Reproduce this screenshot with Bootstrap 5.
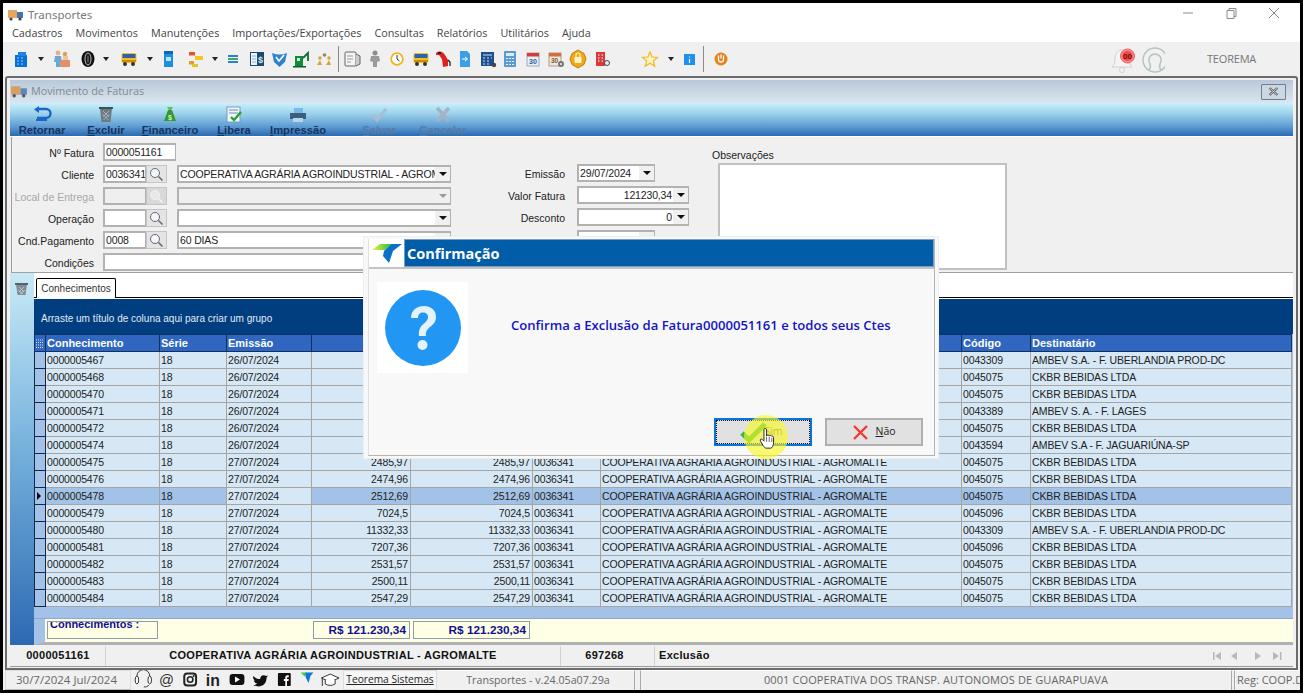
<!DOCTYPE html>
<html lang="pt-BR">
<head>
<meta charset="utf-8">
<title>Transportes</title>
<link href="https://cdn.jsdelivr.net/npm/bootstrap@5.3.0/dist/css/bootstrap.min.css" rel="stylesheet">
<style>
html,body{margin:0;width:1303px;height:695px;overflow:hidden;background:#fff}
body{font-family:"Liberation Sans",Arial,sans-serif;font-size:10.5px;color:#222}
.frame{position:relative;width:1303px;height:693px;border:3px solid #000;display:flex;flex-direction:column;background:#f0f0f0}
.ttl{height:19px;background:#fff;display:flex;align-items:center;padding:4px 0 0 5px;font-family:"Noto Sans",sans-serif;font-size:11.5px;color:#777;gap:4px}
.ctrls{margin-left:auto;display:flex;gap:0;margin-top:-4px}
.menu-bar{height:21px;background:#fff;display:flex;align-items:center;padding:3px 0 0 9px;gap:13px;font-family:"Open Sans",sans-serif;font-size:10.8px;color:#444;border-bottom:1px solid #eee}
.tools{height:33px;background:#f0f0f0;display:flex;align-items:center;padding-left:7px}
.usr{margin-left:auto;display:flex;align-items:center;font-family:"Open Sans",sans-serif;font-size:11px;color:#777}
.usr span{width:135px;padding-left:42px;letter-spacing:-.2px}
.win{margin:0 2px 0 2px;height:594px;border:2px solid #6b6b6b;border-radius:3px 3px 0 0;padding:2px 3px 1px 3px;display:flex;flex-direction:column;background:#f0f0f0;flex:none}
.wtitle{height:23px;flex:none;background:linear-gradient(#b9c8d8,#dae5ef);display:flex;align-items:center;padding-left:1px;gap:3px;font-family:"Open Sans",sans-serif;font-size:10.8px;color:#7f8a96}
.xbtn{margin-left:auto;margin-right:7px;width:25px;height:16px;border:1px solid #6f7f90;border-radius:1px;background:#cbd7e3;display:flex;align-items:center;justify-content:center}
.wbar{height:34px;flex:none;background:linear-gradient(#c9f1fc 0,#9fd4ec 30%,#5c9bd2 72%,#2c69b2 100%);border-bottom:1px solid #fff;display:flex}
.wbtn{width:64px;display:flex;flex-direction:column;align-items:center;padding-top:3px;font-weight:700;font-size:11.2px;line-height:12px;color:#16345f}
.wbtn svg{height:18px;width:22px;display:block}
.wbtn u{text-decoration-thickness:1px}
.wgap{width:17px}
.wbtn.off{color:#557aa5}
.fpanel{height:136px;flex:none;margin-left:1px;border-left:1px solid #a0a0a0;border-bottom:1px solid #a0a0a0;display:flex;font-size:10.5px;padding-top:6px}
.fcol1{width:444px;display:flex;flex-direction:column;gap:4px;flex:none}
.frow{height:18px;display:flex;align-items:center}
.lbl{width:82px;text-align:right;margin-right:9px;flex:none;color:#222;padding-top:3px}
.lbl.dis{color:#a8a8a8}
.fld{height:18px;background:#fff;border-style:solid;border-width:2px 1px 2px 2px;border-color:#b2b2b2;display:flex;align-items:center;padding:0 1px;white-space:nowrap;overflow:hidden;flex:none;position:relative;font-size:10.5px;line-height:14px;letter-spacing:-.15px}
.fld.dis{background:#efefef}
.lup{width:21px;height:18px;background:#e4e4e4;border:1px solid #c4c4c4;display:flex;align-items:center;justify-content:center;flex:none}
.lup.dis{background:#d8d8d8}
.w73{width:73px}.w42{width:43px}.w275{width:274px;margin-left:10px}.w371{width:370px}.w78{width:78px}.w112{width:112px}
.num{justify-content:flex-end;padding-right:16px}
.drop{width:15px;height:14px;background:#f0f0f0;flex:none;display:flex;align-items:center;justify-content:center;position:absolute;right:0;top:0}
.drop.dis i{border-top-color:#999}
.drop i{display:block;width:0;height:0;border-left:4px solid transparent;border-right:4px solid transparent;border-top:4px solid #111}
.fcol2{width:262px;flex:none;padding:21px 0 0 22px;display:flex;flex-direction:column;gap:4px}
.lbl2{width:87px;flex:none;text-align:right;margin-right:12px;padding-top:3px}
.fcol3{flex:none}
.obs-l{margin-left:-6px;line-height:12px;margin:6px 0 2px -6px}
.obs{width:289px;height:107px;background:#fff;border:2px solid #c0c0c0}
.garea{height:372px;flex:none;display:flex;background:#f0f0f0}
.strip{width:24px;flex:none;background:linear-gradient(#c8eaf6,#79b4de 45%,#2c69b2);padding:8px 0 0 4px}
.gmain{width:1259px;flex:none;background:#fff;display:flex;flex-direction:column}
.tabs{height:25px;flex:none;border-bottom:1px solid #000;display:flex;align-items:flex-end;padding-left:2px}
.tabx{width:80px;height:20px;border:1px solid #000;border-bottom:0;border-radius:2px 2px 0 0;background:#fff;text-align:center;line-height:19px;font-size:10px;margin-bottom:-1px;color:#333}
.gbox{margin-top:1px;flex:1;display:flex;flex-direction:column;background:#a4c2e8;min-height:0}
.gpanel{height:35px;flex:none;background:#003e80;color:#e2ebf5;display:flex;align-items:center;padding:3px 0 0 7px;font-size:10px}
.table.gridt{table-layout:fixed;width:1257px;margin:0;border-collapse:collapse;font-size:10.5px;flex:none}
.table.gridt th,.table.gridt td{padding:1px 2px 0 1px;height:17px;line-height:15px;white-space:nowrap;overflow:hidden;color:#222;background-color:#d6e8f5;border:1px solid #a5a5a5;box-shadow:none;font-weight:400;letter-spacing:-.15px;vertical-align:middle}
.table.gridt th{background-color:#2f66c0;color:#fff;font-weight:700;font-size:11px;border-color:#10305f;text-align:left;padding:0 2px 0 1px;letter-spacing:0}
.table.gridt td.ix{background-color:#a4c2e8;border-color:#12284a;padding:0 0 0 2px}
.table.gridt td.r{text-align:right}
.table.gridt tr.sel td{background-color:#a2c2e8}
.table.gridt tr.sel td.lt{background-color:#d6e8f5}
.cw0{width:11px}.cw1{width:114px}.cw2{width:67px}.cw3{width:85px}.cw4{width:99px}.cw5{width:122px}.cw6{width:68px}.cw7{width:361px}.cw8{width:69px}.cw9{width:261px}
.grow-ind{width:0;height:0;border-top:4px solid transparent;border-bottom:4px solid transparent;border-left:4px solid #000;display:block}
.gblank{height:12px;flex:none;background:#a4c2e8;border-bottom:1px solid #8fa9c8}
.gfoot{flex:1;display:flex;background:#ffffe6;border-left:11px solid #a4c2e8;align-items:flex-start;padding-top:2px;border-bottom:3px solid #b0b0b0}
.fbx{border:1px solid #8f9caa;background:#ffffe6;height:18px;color:#10108f;font-weight:700;overflow:hidden;flex:none}
.fb1{width:111px;margin-left:2px;line-height:5px;font-size:11px;padding-left:2px}
.fb2{width:97px;margin-left:155px;text-align:right;font-size:11.8px;line-height:17px;padding-right:3px}
.fb3{width:117px;margin-left:3px;text-align:right;font-size:11.8px;line-height:17px;padding-right:3px}
.wstat{height:22px;flex:none;display:flex;align-items:center;font-weight:700;font-size:11px;background:#f0f0f0;border-bottom:1px solid #999;color:#111;letter-spacing:.3px;padding-left:1px}
.ws{height:20px;display:flex;align-items:center;justify-content:center;border-right:1px solid #d2d2d2;flex:none}
.ws1{width:95px}.ws2{width:455px}.ws3{width:94px;padding-right:6px}
.ws4{border:0;padding-left:4px}
.navs{margin-left:auto;margin-right:9px;display:flex;align-items:center}
.sbar{height:20px;flex:none;display:flex;background:#f0f0f0;font-family:"Open Sans",sans-serif;font-size:11px;color:#666;margin-left:2px}
.sp{height:20px;display:flex;align-items:center;justify-content:center;flex:none;border-right:1px solid #aaa;border-top:1px solid #fff;white-space:nowrap}
.sdate{width:126px;border:1px solid #ddd;border-bottom:1px solid #bbb;font-size:11.5px;color:#666;padding-right:3px}
.slink{width:94px;background:#f6f6f6;color:#222;text-decoration:underline;font-size:10.2px;border:1px solid #ddd}
.sver{width:198px;font-size:10.7px;padding-left:5px}
.sreg{width:66px;justify-content:flex-start;padding-left:2px;border-right:0;overflow:hidden;margin-left:2px;border-left:1px solid #aaa}
.scoop{width:592px;font-size:11px;border-left:1px solid #aaa;margin-left:5px;letter-spacing:.11px}
.dlg{position:absolute;left:361px;top:234px;width:574px;height:221px;background:#f8f8f8;padding:2px 3px 2px 4px;font-family:"Open Sans",sans-serif;box-shadow:0 0 0 1px #eee}
.dlg-in{height:100%;border:1px solid #b4b4b4;border-top:0;border-left-color:#e0e0e0;display:flex;flex-direction:column}
.dhead{height:30px;flex:none;display:flex;background:#fff;border-bottom:2px solid #c4c4c4}
.dlogo{width:35px;flex:none;display:flex;align-items:center;justify-content:center;padding-top:2px}
.dbar{flex:1;background:#015da8;border:1px solid #7b9cc4;color:#fff;font-weight:700;font-size:14.5px;line-height:28px;padding-left:2px;height:28px}
.dbody{flex:1;display:flex;padding:13px 0 0 8px}
.qbox{width:91px;height:91px;background:#fff;flex:none;display:flex;align-items:center;justify-content:center}
.dmsg{margin-left:43px;margin-top:34px;color:#1414c4;font-weight:600;font-size:13.1px;line-height:18px;white-space:nowrap}
.dfoot{height:37px;flex:none;display:flex;justify-content:flex-end;gap:13px;padding-right:11px}
.btn.dbtn{width:98px;height:28px;border-radius:0;padding:0;background:#e1e1e1;font-size:10.5px;color:#222;display:flex;align-items:center;justify-content:center;gap:6px;font-family:"Open Sans",sans-serif}
.btn.sim{border:2px solid #0a72dc;outline:1px dotted #111;outline-offset:-3px;color:#77773a;padding-left:21px;gap:0}
.btn.nao{border:2px solid #b0b0b0}
.hl{position:absolute;left:380px;top:178px;width:44px;height:44px;border-radius:50%;background:rgba(250,250,30,.62);pointer-events:none}
.csr{position:absolute;left:395px;top:191px;width:16px;height:21px;pointer-events:none}
.chk{position:absolute;left:375px;top:184px;width:30px;height:22px}
</style>
</head>
<body>
<div class="frame">
  <div class="ttl">
    <svg width="16" height="12" viewBox="0 0 16 12"><rect x="0" y="1" width="9" height="8" fill="#e8a560"/><rect x="9" y="3" width="6" height="6" fill="#3f73b5"/><circle cx="3" cy="10" r="1.600" fill="#444"/><circle cx="12" cy="10" r="1.600" fill="#444"/></svg>
    <span>Transportes</span>
    <div class="ctrls">
      <svg width="120" height="19" viewBox="1180 3 120 19"><path d="M1183 13h10" stroke="#8a8a8a"/><path d="M1227 10.500h7v8h-7zM1229 10.500v-2h7v8h-2" fill="none" stroke="#8a8a8a"/><path d="M1269 8l10 10M1279 8l-10 10" stroke="#8a8a8a"/></svg>
    </div>
  </div>
  <div class="menu-bar"><span>Cadastros</span><span>Movimentos</span><span>Manutenções</span><span>Importações/Exportações</span><span>Consultas</span><span>Relatórios</span><span>Utilitários</span><span>Ajuda</span></div>
  <div class="tools">
    <svg width="725" height="33" viewBox="10 43 725 33">
      <defs>
        <path id="crt" d="M-3 -2h6l-3 4z" fill="#222"/>
        <g id="bus"><rect x="-7.500" y="-6" width="15" height="10" rx="2" fill="#f0c020"/><rect x="-6.500" y="-5" width="13" height="4" fill="#2f62a8"/><rect x="-7" y="1" width="14" height="2" fill="#d08a10"/><circle cx="-4" cy="5" r="2" fill="#333"/><circle cx="4" cy="5" r="2" fill="#333"/></g>
      </defs>
      <rect x="15" y="55" width="12" height="12" fill="#0a70d8"/><rect x="18" y="52" width="8" height="4" fill="#1c84e4"/><path d="M17 58h2M21 58h2M17 61h2M21 61h2M17 64h2M21 64h2" stroke="#9cc8f0" stroke-width="1"/>
      <use href="#crt" x="41" y="59"/>
      <circle cx="58" cy="53" r="2.400" fill="#e8b080"/><path d="M55 56h6l1 6h-2v5h-4v-5h-2z" fill="#66a8d8"/><circle cx="65" cy="54" r="2.200" fill="#d9a060"/><rect x="60" y="60" width="10" height="7" rx="1" fill="#e0906a"/><path d="M63 56h5v4h-5z" fill="#f0c5a0"/>
      <ellipse cx="88" cy="59" rx="6.500" ry="8" fill="#111"/><ellipse cx="88" cy="59" rx="3" ry="6" fill="none" stroke="#eee" stroke-width=".8"/><ellipse cx="88" cy="59" rx="1" ry="4" fill="#555"/>
      <use href="#crt" x="106" y="59"/>
      <use href="#bus" x="129" y="59"/>
      <use href="#crt" x="150" y="59"/>
      <rect x="164" y="51" width="9" height="16" fill="#1c8fe0"/><rect x="164" y="51" width="9" height="3" fill="#0c68b4"/><path d="M166 57h5v4h-5z" fill="#bfe3f8"/>
      <rect x="189" y="52" width="6" height="3.500" fill="#e0542c"/><rect x="195" y="56" width="8" height="4" fill="#f7c51e"/><rect x="189" y="61" width="5" height="3.500" fill="#e89a28"/><rect x="192" y="64" width="6" height="3" fill="#e0c81e"/>
      <use href="#crt" x="215" y="59"/>
      <rect x="228" y="55" width="10" height="2" fill="#2d7fc8"/><rect x="228" y="58" width="10" height="2" fill="#3fa668"/><rect x="228" y="61" width="10" height="2" fill="#2d7fc8"/>
      <rect x="250" y="52" width="14" height="14" fill="#1b4a6e"/><rect x="251" y="53" width="6" height="12" fill="#eef5fa"/><path d="M252 56h4M252 59h4M252 62h4" stroke="#78a0c0" stroke-width=".8"/><text x="258" y="63" font-size="9" fill="#cfe6f5" font-family="Liberation Sans" font-weight="700">$</text>
      <path d="M272 53c5 2 10 2 15 0l-2 9-5.500 5-5.500-5z" fill="#2f82d0"/><path d="M276 57l3 4 5-6" stroke="#fff" stroke-width="1.600" fill="none"/>
      <rect x="295" y="56" width="8" height="10" fill="#128a3a"/><path d="M303 58l5-5v8" stroke="#0f6e30" stroke-width="1.800" fill="none"/><rect x="293" y="66" width="13" height="1.500" fill="#0b5e2a"/><rect x="297" y="58" width="3" height="3" fill="#d6f0dc"/>
      <circle cx="320" cy="58" r="1.800" fill="#d8a93a"/><circle cx="329" cy="58" r="1.800" fill="#d8a93a"/><circle cx="324.500" cy="55" r="1.800" fill="#8a8a6a"/><path d="M317 65l3-5 2 5zM326 65l3-5 2 5z" fill="#cfa838"/>
      <path d="M338.500 46v26" stroke="#8b8b8b"/>
      <rect x="345" y="52" width="11" height="14" rx="1" fill="#f4f4f4" stroke="#666"/><path d="M347 56h6M347 59h6M347 62h4" stroke="#999"/><path d="M356 54l4 2v8l-4 2" fill="#ccc" stroke="#666"/>
      <circle cx="375" cy="53" r="2.500" fill="#8d8d8d"/><path d="M371 56h8l1 5-3 1v5h-4v-5l-3-1z" fill="#9a9a9a"/>
      <circle cx="397" cy="59" r="5.800" fill="#fff" stroke="#f2b21c" stroke-width="1.800"/><path d="M397 55v4l2.500 2" stroke="#333" fill="none"/>
      <use href="#bus" x="421" y="59"/>
      <path d="M436 53c4-3 7-1 9 2l3 5v6l-5 1-1-8-3-4h-3z" fill="#e0201c"/><path d="M448 60l2 2v4" stroke="#111" fill="none" stroke-width="1.200"/><rect x="438" y="52" width="3" height="2" fill="#222"/>
      <path d="M460 51h7l3 3v13h-10z" fill="#3d9ee8"/><path d="M462 59h5M465 57l2.500 2-2.500 2" stroke="#fff" fill="none"/>
      <rect x="481" y="52" width="13" height="14" fill="#1e4f8e"/><path d="M483 55h9M483 58h2M487 58h2M491 58h1M483 61h2M487 61h2M483 64h2M487 64h2" stroke="#cfe2f5" stroke-width="1"/><circle cx="494" cy="65" r="2.200" fill="#445"/>
      <rect x="504" y="51" width="12" height="16" rx="1" fill="#5a9ad0"/><rect x="506" y="53" width="8" height="3" fill="#d9ecf8"/><path d="M506 58.500h2M509 58.500h2M512 58.500h2M506 61.500h2M509 61.500h2M512 61.500h2M506 64.500h2M509 64.500h2M512 64.500h2" stroke="#e9f4fb"/>
      <rect x="527" y="53" width="12" height="13" fill="#e6f0f8" stroke="#9ab"/><rect x="527" y="53" width="12" height="3.500" fill="#d83a34"/><text x="529" y="64" font-size="7" font-weight="700" fill="#2a5f9e" font-family="Liberation Sans">30</text>
      <rect x="549" y="53" width="12" height="13" fill="#f2e7dc" stroke="#a98"/><rect x="549" y="53" width="12" height="3.500" fill="#d0703c"/><text x="551" y="63" font-size="6.500" font-weight="700" fill="#7a5a3a" font-family="Liberation Sans">30</text><circle cx="561" cy="64" r="3" fill="#777"/><circle cx="561" cy="64" r="1" fill="#eee"/>
      <path d="M578 50l6 3.500 2 5.500-2 5.500-6 3.500-6-3.500-2-5.500 2-5.500z" fill="#f0a818" stroke="#c87e08"/><rect x="574.500" y="57" width="7" height="6" rx="1" fill="#fff3c8"/><path d="M576 57v-2a2 2 0 0 1 4 0v2" stroke="#fff3c8" fill="none" stroke-width="1.200"/>
      <rect x="596" y="52" width="9" height="14" fill="#d83a3a"/><path d="M598 55h1.500M601.500 55h1.500M598 58h1.500M601.500 58h1.500M598 61h1.500M601.500 61h1.500" stroke="#fff"/><circle cx="607" cy="63" r="2.500" fill="#e8eef4" stroke="#445"/>
      <path d="M650 52l2 5 5.500.4-4.200 3.500 1.400 5.300-4.700-3-4.700 3 1.400-5.300-4.200-3.500 5.500-.4z" fill="#fff4c0" stroke="#f0b820" stroke-width="1.200"/>
      <use href="#crt" x="671" y="59"/>
      <rect x="684" y="54" width="11" height="11" fill="#1e90f0"/><path d="M689.500 56.500v1M689.500 59v4" stroke="#fff" stroke-width="1.200"/>
      <path d="M703.500 46v26" stroke="#8b8b8b"/>
      <circle cx="721" cy="59" r="6.500" fill="#e8821a"/><path d="M718.500 55.500v4a2.500 2.500 0 0 0 5 0v-4" stroke="#fff" fill="none" stroke-width="1.300"/><path d="M721 54.500v4" stroke="#fff" stroke-width="1.300"/>
    </svg>
    <div class="usr">
      <svg width="60" height="33" viewBox="1105 43 60 33">
        <path d="M1122 50c5 0 7 4 7 9 0 4 1 6 3 8h-20c2-2 3-4 3-8 0-5 2-9 7-9z" fill="#f4f4f4" stroke="#d0d0d0"/><circle cx="1122" cy="70" r="2.500" fill="#f4f4f4" stroke="#d0d0d0"/>
        <circle cx="1127.500" cy="56" r="7" fill="#f48a8a" stroke="#f06060"/><circle cx="1127.500" cy="56" r="5" fill="#f04a4a"/><text x="1127.500" y="59" text-anchor="middle" font-size="8" font-weight="700" fill="#7a0a0a" font-family="Liberation Sans">00</text>
        <circle cx="1155" cy="60" r="12" fill="#f0f0f0" stroke="#b4c4c0" stroke-width="1.500"/><path d="M1149 70c2-3 2-4 1-6-2-3-2-9 5-10 7 1 7 7 5 10-1 2-1 3 1 6" fill="none" stroke="#b4c4c0" stroke-width="1.500"/>
      </svg>
      <span>TEOREMA</span>
    </div>
  </div>

  <div class="win">
    <div class="wtitle">
      <svg width="17" height="13" viewBox="0 0 16 12"><rect x="0" y="1" width="9" height="8" fill="#d6a062"/><rect x="9" y="3" width="6" height="6" fill="#5f86b5"/><circle cx="3" cy="10" r="1.600" fill="#555"/><circle cx="12" cy="10" r="1.600" fill="#555"/></svg>
      <span>Movimento de Faturas</span>
      <div class="xbtn"><svg width="11" height="9" viewBox="0 0 11 9"><path d="M1.500 1l8 7M9.500 1l-8 7" stroke="#555" stroke-width="2.200"/><path d="M1.500 1l8 7M9.500 1l-8 7" stroke="#eee" stroke-width=".8"/></svg></div>
    </div>
    <div class="wbar">
      <div class="wbtn"><svg viewBox="0 0 22 18"><path d="M7 3h8a4 4 0 0 1 0 9H6" fill="none" stroke="#1c66c8" stroke-width="2.400"/><path d="M8 0L3 3.500 8 7z" fill="#1c66c8"/><rect x="5" y="13" width="11" height="2" fill="#1c66c8"/></svg><span>Retornar</span></div>
      <div class="wbtn"><svg viewBox="0 0 22 18"><path d="M5 2h12l-1.500 14h-9z" fill="#6c7a80"/><rect x="4" y="1" width="14" height="2" fill="#40505a"/><path d="M8 5l6 6M14 5l-6 6M7.500 8l6 6M14.500 8l-6 6" stroke="#b4c0c6" stroke-width=".8"/></svg><span><u>E</u>xcluir</span></div>
      <div class="wbtn"><svg viewBox="0 0 22 18"><path d="M9 4h4l4 11H5z" fill="#2f9a32"/><path d="M8 1h6l-2 3h-2z" fill="#6bb84a"/><text x="11" y="14" text-anchor="middle" font-size="7" font-weight="700" fill="#e8f0a8" font-family="Liberation Sans">$</text></svg><span><u>F</u>inanceiro</span></div>
      <div class="wbtn"><svg viewBox="0 0 22 18"><rect x="4" y="1" width="13" height="15" fill="#f2f6fa" stroke="#7a9ac0"/><path d="M6 4h9M6 7h9" stroke="#6a8ab0"/><path d="M8 11l3 3 7-8" stroke="#28a030" stroke-width="2.400" fill="none"/></svg><span><u>L</u>ibera</span></div>
      <div class="wbtn"><svg viewBox="0 0 22 18"><rect x="7" y="2" width="9" height="5" fill="#7ab8e8"/><rect x="3" y="7" width="16" height="6" fill="#3a5e7e"/><rect x="6" y="12" width="10" height="4" fill="#b8d4ea"/></svg><span><u>I</u>mpressão</span></div>
      <div class="wgap"></div>
      <div class="wbtn off"><svg viewBox="0 0 22 18"><path d="M5 9l4 5 9-11" stroke="#a8bcd4" stroke-width="3" fill="none"/></svg><span><u>S</u>alvar</span></div>
      <div class="wbtn off"><svg viewBox="0 0 22 18"><path d="M5 2l12 13M17 2L5 15" stroke="#a4b4c4" stroke-width="3.600"/></svg><span><u>C</u>ancelar</span></div>
    </div>
    <div class="fpanel">
      <div class="fcol1">
        <div class="frow"><span class="lbl">Nº Fatura</span><div class="fld w73">0000051161</div></div>
        <div class="frow"><span class="lbl">Cliente</span><div class="fld w42">0036341</div><div class="lup"><svg width="15" height="15" viewBox="0 0 15 15"><circle cx="6" cy="6" r="4.500" fill="#f4f8f8" stroke="#667"/><path d="M9.500 9.500l4 4" stroke="#667" stroke-width="1.600"/></svg></div><div class="fld w275">COOPERATIVA AGRÁRIA AGROINDUSTRIAL - AGROMALTE<div class="drop"><i></i></div></div></div>
        <div class="frow"><span class="lbl dis">Local de Entrega</span><div class="fld w42 dis"></div><div class="lup dis"><svg width="15" height="15" viewBox="0 0 15 15"><circle cx="6" cy="6" r="4.500" fill="#e8e8e8" stroke="#f4f4f4"/><path d="M9.500 9.500l4 4" stroke="#f4f4f4" stroke-width="1.600"/></svg></div><div class="fld w275 dis"><div class="drop dis"><i></i></div></div></div>
        <div class="frow"><span class="lbl">Operação</span><div class="fld w42"></div><div class="lup"><svg width="15" height="15" viewBox="0 0 15 15"><circle cx="6" cy="6" r="4.500" fill="#f4f8f8" stroke="#667"/><path d="M9.500 9.500l4 4" stroke="#667" stroke-width="1.600"/></svg></div><div class="fld w275"><div class="drop"><i></i></div></div></div>
        <div class="frow"><span class="lbl">Cnd.Pagamento</span><div class="fld w42">0008</div><div class="lup"><svg width="15" height="15" viewBox="0 0 15 15"><circle cx="6" cy="6" r="4.500" fill="#f4f8f8" stroke="#667"/><path d="M9.500 9.500l4 4" stroke="#667" stroke-width="1.600"/></svg></div><div class="fld w275">60 DIAS<div class="drop"><i></i></div></div></div>
        <div class="frow"><span class="lbl">Condições</span><div class="fld w371"></div></div>
      </div>
      <div class="fcol2">
        <div class="frow"><span class="lbl2">Emissão</span><div class="fld w78">29/07/2024<div class="drop"><i></i></div></div></div>
        <div class="frow"><span class="lbl2">Valor Fatura</span><div class="fld w112 num">121230,34<div class="drop"><i></i></div></div></div>
        <div class="frow"><span class="lbl2">Desconto</span><div class="fld w112 num">0<div class="drop"><i></i></div></div></div>
        <div class="frow"><span class="lbl2"></span><div class="fld w78"><div class="drop"><i></i></div></div></div>
      </div>
      <div class="fcol3">
        <div class="obs-l">Observações</div>
        <div class="obs"></div>
      </div>
    </div>
    <div class="garea">
      <div class="strip"><svg width="15" height="14" viewBox="0 0 15 14"><path d="M2 2h11l-1.500 11h-8z" fill="#7f8e92"/><rect x="1" y="1" width="13" height="2" fill="#556268"/><path d="M5 5l5 5M10 5l-5 5M4 8l5 4M11 8l-5 4" stroke="#cbd5d8" stroke-width=".7"/></svg></div>
      <div class="gmain">
        <div class="tabs"><div class="tabx">Conhecimentos</div></div>
        <div class="gbox">
          <div class="gpanel">Arraste um título de coluna aqui para criar um grupo</div>
          <table class="table gridt">
            <colgroup><col class="cw0"><col class="cw1"><col class="cw2"><col class="cw3"><col class="cw4"><col class="cw5"><col class="cw6"><col class="cw7"><col class="cw8"><col class="cw9"></colgroup>
            <thead><tr><th class="px-0"><svg width="9" height="11" viewBox="0 0 9 11"><path d="M1 2h7M1 4.500h7M1 7h7M1 9.500h7" stroke="#dfe8f5" stroke-dasharray="1 1"/></svg></th><th>Conhecimento</th><th>Série</th><th>Emissão</th><th></th><th></th><th></th><th></th><th>Código</th><th>Destinatário</th></tr></thead>
            <tbody>
              <tr><td class="ix"></td><td>0000005467</td><td>18</td><td>26/07/2024</td><td></td><td></td><td></td><td></td><td>0043309</td><td>AMBEV S.A. -  F. UBERLANDIA PROD-DC</td></tr>
              <tr><td class="ix"></td><td>0000005468</td><td>18</td><td>26/07/2024</td><td></td><td></td><td></td><td></td><td>0045075</td><td>CKBR BEBIDAS LTDA</td></tr>
              <tr><td class="ix"></td><td>0000005470</td><td>18</td><td>26/07/2024</td><td></td><td></td><td></td><td></td><td>0045075</td><td>CKBR BEBIDAS LTDA</td></tr>
              <tr><td class="ix"></td><td>0000005471</td><td>18</td><td>26/07/2024</td><td></td><td></td><td></td><td></td><td>0043389</td><td>AMBEV S. A. - F. LAGES</td></tr>
              <tr><td class="ix"></td><td>0000005472</td><td>18</td><td>26/07/2024</td><td></td><td></td><td></td><td></td><td>0045075</td><td>CKBR BEBIDAS LTDA</td></tr>
              <tr><td class="ix"></td><td>0000005474</td><td>18</td><td>26/07/2024</td><td></td><td></td><td></td><td></td><td>0043594</td><td>AMBEV S.A  - F. JAGUARIÚNA-SP</td></tr>
              <tr><td class="ix"></td><td>0000005475</td><td>18</td><td>27/07/2024</td><td class="r">2485,97</td><td class="r">2485,97</td><td>0036341</td><td>COOPERATIVA AGRÁRIA AGROINDUSTRIAL - AGROMALTE</td><td>0045075</td><td>CKBR BEBIDAS LTDA</td></tr>
              <tr><td class="ix"></td><td>0000005476</td><td>18</td><td>27/07/2024</td><td class="r">2474,96</td><td class="r">2474,96</td><td>0036341</td><td>COOPERATIVA AGRÁRIA AGROINDUSTRIAL - AGROMALTE</td><td>0045075</td><td>CKBR BEBIDAS LTDA</td></tr>
              <tr class="sel"><td class="ix"><i class="grow-ind"></i></td><td>0000005478</td><td>18</td><td class="lt">27/07/2024</td><td class="r">2512,69</td><td class="r">2512,69</td><td>0036341</td><td>COOPERATIVA AGRÁRIA AGROINDUSTRIAL - AGROMALTE</td><td>0045075</td><td>CKBR BEBIDAS LTDA</td></tr>
              <tr><td class="ix"></td><td>0000005479</td><td>18</td><td>27/07/2024</td><td class="r">7024,5</td><td class="r">7024,5</td><td>0036341</td><td>COOPERATIVA AGRÁRIA AGROINDUSTRIAL - AGROMALTE</td><td>0045096</td><td>CKBR BEBIDAS LTDA</td></tr>
              <tr><td class="ix"></td><td>0000005480</td><td>18</td><td>27/07/2024</td><td class="r">11332,33</td><td class="r">11332,33</td><td>0036341</td><td>COOPERATIVA AGRÁRIA AGROINDUSTRIAL - AGROMALTE</td><td>0043309</td><td>AMBEV S.A. -  F. UBERLANDIA PROD-DC</td></tr>
              <tr><td class="ix"></td><td>0000005481</td><td>18</td><td>27/07/2024</td><td class="r">7207,36</td><td class="r">7207,36</td><td>0036341</td><td>COOPERATIVA AGRÁRIA AGROINDUSTRIAL - AGROMALTE</td><td>0045096</td><td>CKBR BEBIDAS LTDA</td></tr>
              <tr><td class="ix"></td><td>0000005482</td><td>18</td><td>27/07/2024</td><td class="r">2531,57</td><td class="r">2531,57</td><td>0036341</td><td>COOPERATIVA AGRÁRIA AGROINDUSTRIAL - AGROMALTE</td><td>0045075</td><td>CKBR BEBIDAS LTDA</td></tr>
              <tr><td class="ix"></td><td>0000005483</td><td>18</td><td>27/07/2024</td><td class="r">2500,11</td><td class="r">2500,11</td><td>0036341</td><td>COOPERATIVA AGRÁRIA AGROINDUSTRIAL - AGROMALTE</td><td>0045075</td><td>CKBR BEBIDAS LTDA</td></tr>
              <tr><td class="ix"></td><td>0000005484</td><td>18</td><td>27/07/2024</td><td class="r">2547,29</td><td class="r">2547,29</td><td>0036341</td><td>COOPERATIVA AGRÁRIA AGROINDUSTRIAL - AGROMALTE</td><td>0045075</td><td>CKBR BEBIDAS LTDA</td></tr>
            </tbody>
          </table>
          <div class="gblank"></div>
          <div class="gfoot"><div class="fbx fb1">Conhecimentos :</div><div class="fbx fb2">R$ 121.230,34</div><div class="fbx fb3">R$ 121.230,34</div></div>
        </div>
      </div>
    </div>
    <div class="wstat">
      <div class="ws ws1">0000051161</div>
      <div class="ws ws2">COOPERATIVA AGRÁRIA AGROINDUSTRIAL - AGROMALTE</div>
      <div class="ws ws3">697268</div>
      <div class="ws ws4">Exclusão</div>
      <div class="navs"><svg width="72" height="12" viewBox="0 0 72 12"><g fill="#b8b8b8"><rect x="1" y="2" width="1.500" height="8"/><path d="M9 2v8L3 6zM25 2v8l-6-4zM43 2v8l6-4zM61 2v8l6-4z"/><rect x="68" y="2" width="1.500" height="8"/></g></svg></div>
    </div>
  </div>

  <div class="sbar">
    <div class="sp sdate">30/7/2024 Jul/2024</div>
    <svg width="215" height="20" viewBox="132 670 215 20">
      <path d="M138 681v-5a6.500 6.500 0 0 1 13 0v5" fill="none" stroke="#333"/><ellipse cx="138" cy="680" rx="1.800" ry="4" fill="#fff" stroke="#333"/><ellipse cx="151" cy="680" rx="1.800" ry="4" fill="#fff" stroke="#333"/><path d="M150 685c-1 2-3 2-5 2" stroke="#333" fill="none"/>
      <text x="168" y="685" text-anchor="middle" font-size="15" fill="#333" font-family="Liberation Sans">@</text>
      <rect x="186" y="673.500" width="12" height="12" rx="3" fill="none" stroke="#222" stroke-width="2"/><circle cx="192" cy="679.500" r="2.800" fill="none" stroke="#222" stroke-width="1.600"/><circle cx="195.500" cy="676" r="1" fill="#222"/>
      <text x="215" y="686" text-anchor="middle" font-size="16" font-weight="700" fill="#222" font-family="Liberation Sans">in</text>
      <rect x="232" y="674" width="15" height="11" rx="3" fill="#111"/><path d="M237.500 676.500v6l5-3z" fill="#fff"/>
      <path d="M256 676c2 2 4 3 7 3 0-3 3-5 6-3l2-.5-1.500 2c0 6-4 9-8 9-2 0-4-.5-5.500-1.500 2 0 3-.5 4-1.500-2 0-3-2-3.500-3h1.500c-2-1-2.500-3-2-4.500z" fill="#111"/>
      <rect x="281" y="673" width="13" height="13" rx="1" fill="#111"/><path d="M288.500 686v-5h-1.500v-2h1.500v-1.500c0-1.500 1-2.300 2.200-2.300h1.300v2h-1c-.5 0-.8.300-.8.800v1h1.800l-.3 2h-1.500v5z" fill="#fff"/>
      <path d="M304 672.500h7l-3 4z" fill="#39d04a"/><path d="M309 672.500h8l-3 3.500-2 7-3-6z" fill="#0b78d8"/>
      <path d="M325 678l9-4 9 4-9 4z" fill="#fff" stroke="#333"/><path d="M329 680v4c3 2 7 2 10 0v-4" fill="#fff" stroke="#333"/><path d="M326 679v7" stroke="#333"/>
    </svg>
    <div class="sp slink">Teorema Sistemas</div>
    <div class="sp sver">Transportes - v.24.05a07.29a</div>
    <div class="sp scoop">0001 COOPERATIVA DOS TRANSP. AUTONOMOS DE  GUARAPUAVA</div>
    <div class="sp sreg">Reg: COOP.DE TRANSP</div>
  </div>

  <div class="dlg">
    <div class="dlg-in">
      <div class="dhead">
        <div class="dlogo"><svg width="31" height="20" viewBox="0 0 31 20"><defs><linearGradient id="lg" x1="0" x2="1"><stop offset="0" stop-color="#f4f040"/><stop offset="1" stop-color="#22c040"/></linearGradient></defs><path d="M1 6L9 0h11l-6 6z" fill="url(#lg)"/><path d="M13 7L20 0h11l-9 7-4 12-6-7z" fill="#0a70c8"/></svg></div>
        <div class="dbar">Confirmação</div>
      </div>
      <div class="dbody">
        <div class="qbox"><svg width="76" height="76" viewBox="0 0 76 76"><circle cx="38" cy="38" r="38" fill="#2196f3"/><path d="M26 28c0-8 6-12 13-12s12 4 12 11c0 10-11 9-10 19h-7c-1-13 9-12 9-19 0-3-2-4.500-5-4.500s-5 2-5 5.500z" fill="#e3f2fd"/><circle cx="37.500" cy="55" r="5" fill="#e3f2fd"/></svg></div>
        <div class="dmsg">Confirma a Exclusão da Fatura0000051161 e todos seus Ctes</div>
      </div>
      <div class="dfoot">
        <button type="button" class="btn dbtn sim">Sim</button>
        <button type="button" class="btn dbtn nao"><svg width="17" height="17" viewBox="0 0 17 17"><path d="M2 2l13 13M15 2L2 15" stroke="#f03a32" stroke-width="2.400"/></svg><span><u>N</u>ão</span></button>
      </div>
    </div>
    <svg class="chk" viewBox="0 0 30 22"><path d="M3 12l7 7L26 3" fill="none" stroke="#3cb84a" stroke-width="5"/></svg>
    <div class="hl"></div>
    <svg class="csr" viewBox="0 0 17 24"><path d="M5 2c0-2 3-2 3 0v7c1-1 2-1 3 0 1-1 2-1 3 .5 1-.5 2 0 2 1.500v6c0 3-2 6-3 6H7c-1 0-2-2-3-3l-3-5c-1-2 1-3 2-2l2 2z" fill="#fff" stroke="#111"/><path d="M8 10v6M11 10v6M14 11v5" stroke="#111" stroke-width=".7"/></svg>
  </div>
</div>
<script src="https://cdn.jsdelivr.net/npm/bootstrap@5.3.0/dist/js/bootstrap.bundle.min.js"></script>
</body>
</html>
